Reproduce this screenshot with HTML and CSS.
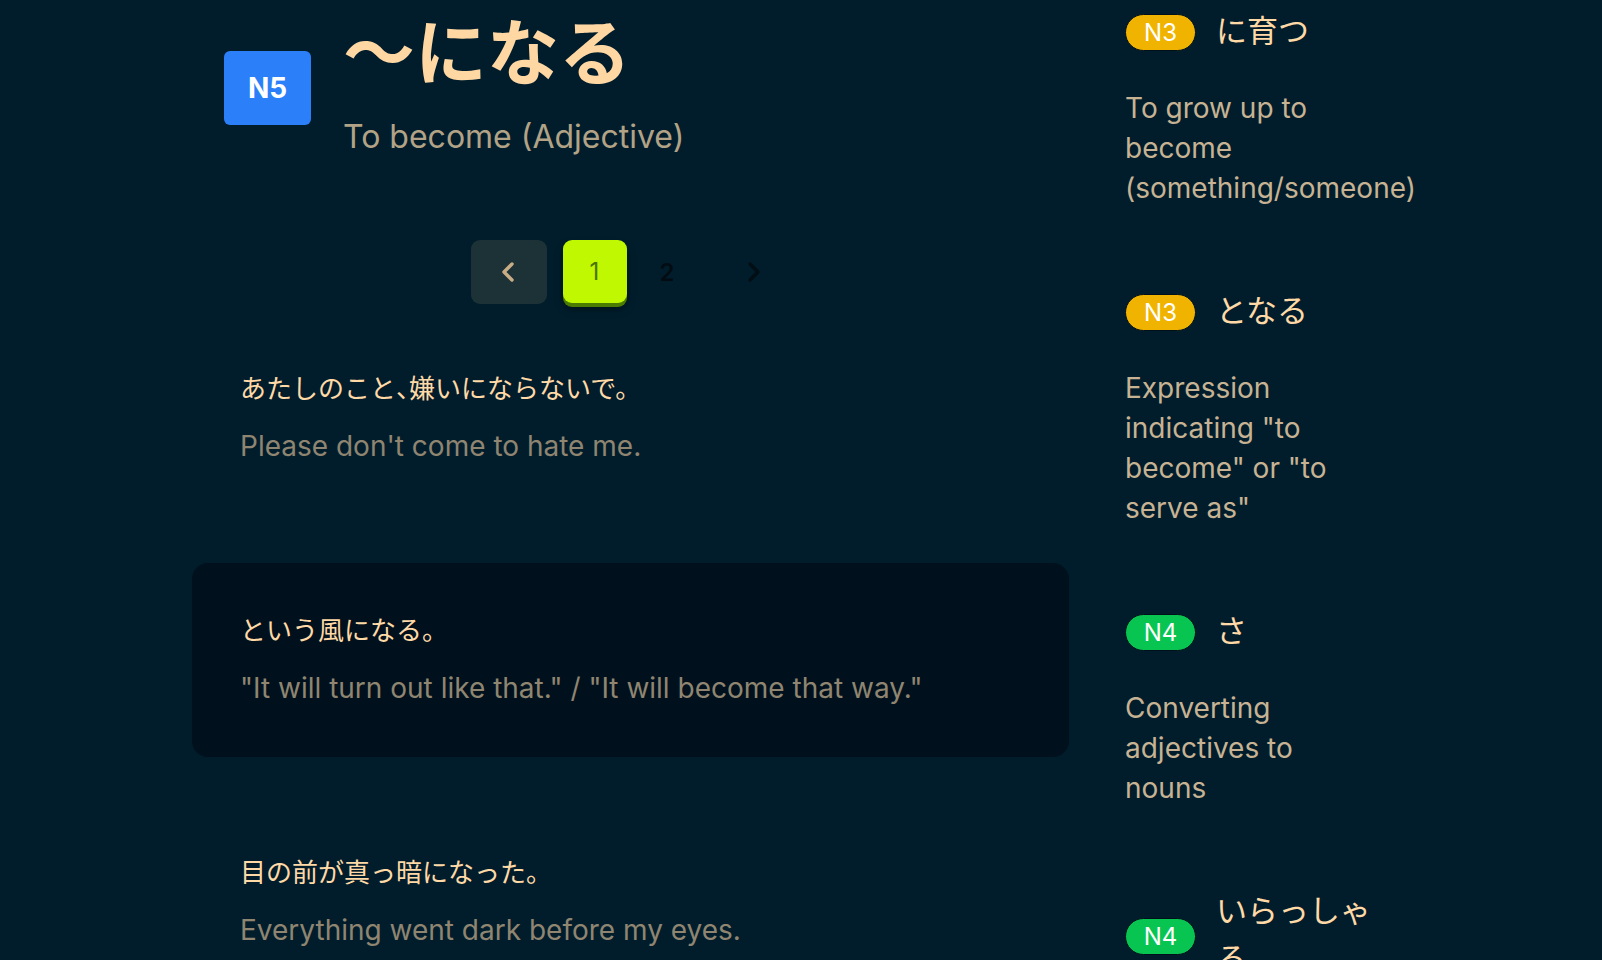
FILE: index.html
```html
<!DOCTYPE html>
<html lang="ja">
<head>
<meta charset="utf-8">
<title>〜になる</title>
<link rel="stylesheet" href="styles.css">
</head>
<body>
<div class="page">
  <main class="main">
    <header class="head">
      <span class="level">N5</span>
      <div class="titles">
        <h1 class="title">〜になる</h1>
        <p class="meaning">To become (Adjective)</p>
      </div>
    </header>

    <nav class="pager">
      <button class="pg prev" aria-label="Previous">
        <svg viewBox="0 0 24 24" width="24" height="24"><path d="M15 4 L7 12 L15 20" fill="none" stroke="#c9ad86" stroke-width="3.4" stroke-linecap="round" stroke-linejoin="round"/></svg>
      </button>
      <button class="pg num active">1</button>
      <button class="pg num two">2</button>
      <button class="pg next" aria-label="Next">
        <svg viewBox="0 0 24 24" width="24" height="24"><path d="M9 4 L17 12 L9 20" fill="none" stroke="#020d14" stroke-width="3.4" stroke-linecap="round" stroke-linejoin="round"/></svg>
      </button>
    </nav>

    <ul class="examples">
      <li class="ex">
        <p class="jp">あたしのこと<span class="half">、</span>嫌いにならないで。</p>
        <p class="en">Please don't come to hate me.</p>
      </li>
      <li class="ex hl">
        <p class="jp">という風になる。</p>
        <p class="en">"It will turn out like that." / "It will become that way."</p>
      </li>
      <li class="ex">
        <p class="jp">目の前が真っ暗になった。</p>
        <p class="en">Everything went dark before my eyes.</p>
      </li>
    </ul>
  </main>

  <aside class="related">
    <div class="rel">
      <div class="rel-head"><span class="pill n3">N3</span><span class="word">に育つ</span></div>
      <p class="desc">To grow up to become (something/someone)</p>
    </div>
    <div class="rel">
      <div class="rel-head"><span class="pill n3">N3</span><span class="word">となる</span></div>
      <p class="desc">Expression indicating "to become" or "to serve as"</p>
    </div>
    <div class="rel">
      <div class="rel-head"><span class="pill n4">N4</span><span class="word">さ</span></div>
      <p class="desc">Converting adjectives to nouns</p>
    </div>
    <div class="rel">
      <div class="rel-head"><span class="pill n4">N4</span><span class="word">いらっしゃる</span></div>
      <p class="desc">To come, to go, to be (honorific)</p>
    </div>
  </aside>
</div>
</body>
</html>
```

FILE: styles.css
```css
* { box-sizing: border-box; }

html, body {
  margin: 0;
  padding: 0;
  background: #011d2c;
  height: 100%;
  overflow: hidden;
}

body {
  font-family: "Inter", "Noto Sans CJK JP", sans-serif;
  color: #c7b393;
}

.page {
  display: flex;
  align-items: flex-start;
  gap: 56px;
  padding-left: 192px;
}

.main {
  width: 877px;
  flex: none;
}

/* header */
.head {
  display: flex;
  align-items: flex-start;
  gap: 32px;
  padding: 5px 0 0 32px;
}

.level {
  flex: none;
  width: 87px;
  height: 74px;
  margin-top: 46px;
  background: #2b7ff8;
  border-radius: 6px;
  color: #ffffff;
  font-family: "Inter", sans-serif;
  font-weight: 700;
  font-size: 28px;
  display: flex;
  align-items: center;
  justify-content: center;
}

.titles { display: flex; flex-direction: column; }

.title {
  margin: 0;
  font-family: "Noto Sans CJK JP", sans-serif;
  font-weight: 700;
  font-size: 72px;
  line-height: 86px;
  color: #ffd7a3;
}

.meaning {
  margin: 22px 0 0;
  font-family: "Inter", sans-serif;
  font-size: 32px;
  line-height: 48px;
  color: #b3a386;
}

/* pager */
.pager {
  display: flex;
  justify-content: center;
  gap: 16px;
  margin-top: 79px;
}

.pg {
  height: 64px;
  border: 0;
  padding: 0;
  background: transparent;
  font-family: "Inter", sans-serif;
  font-size: 24px;
  display: flex;
  align-items: center;
  justify-content: center;
  border-radius: 9px;
}

.prev, .next { width: 76px; }
.prev { background: #1d3236; }

.num { width: 64px; color: #020c12; font-weight: 600; }
.num.two { width: 56px; padding-right: 7px; }

.num.active {
  background: #bff800;
  color: #4d7300;
  font-weight: 400;
  height: 63px;
  box-shadow: 0 4px 0 #4b7b00, 0 6px 8px rgba(0, 0, 0, 0.45);
}

/* examples */
.examples {
  list-style: none;
  margin: 17px 0 0;
  padding: 0;
  display: flex;
  flex-direction: column;
  gap: 48px;
}

.ex {
  height: 194px;
  padding: 48px 48px 0;
  border-radius: 16px;
}

.ex.hl { background: #00111d; }

.jp {
  margin: 0;
  font-family: "Noto Sans CJK JP", sans-serif;
  font-size: 26px;
  line-height: 36px;
  color: #ffd9a6;
}

.half { font-feature-settings: "halt" 1; }

.en {
  margin: 21px 0 0;
  font-family: "Inter", sans-serif;
  font-size: 28px;
  line-height: 40px;
  color: #8f8571;
}

/* related */
.related {
  width: 250px;
  flex: none;
  padding-top: 11px;
}

.rel { margin-bottom: 83px; }

.rel-head {
  display: flex;
  align-items: center;
  gap: 20px;
}

.pill {
  flex: none;
  width: 71px;
  height: 37px;
  border-radius: 19px;
  border: 1.5px solid #00101a;
  color: #ffffff;
  font-family: "Inter", sans-serif;
  font-size: 24px;
  display: flex;
  align-items: center;
  justify-content: center;
}

.n3 { background: #f0b400; }
.n4 { background: #08c552; }

.word {
  flex: 1;
  min-width: 0;
  margin-top: -6px;
  font-family: "Noto Sans CJK JP", sans-serif;
  font-size: 31px;
  line-height: 48px;
  color: #ffd9a6;
}

.desc {
  margin: 35px 0 0;
  font-family: "Inter", sans-serif;
  font-size: 28px;
  line-height: 40px;
  color: #c7b393;
}
```
